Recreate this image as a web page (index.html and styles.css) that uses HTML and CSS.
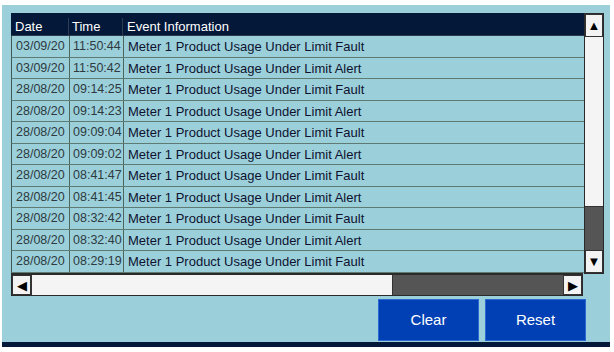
FILE: index.html
```html
<html>
<head>
	<meta charset="utf-8">
	<title>Event Log</title>
	<link rel="stylesheet" href="styles.css">
</head>
<body>
	<div class="screen">
		<div class="log">
			<div class="log-main">
				<div class="row head">
					<div class="cell c-date">Date</div>
					<div class="cell c-time">Time</div>
					<div class="cell c-event">Event Information</div>
				</div>
				<div class="row"><div class="cell c-date">03/09/20</div><div class="cell c-time">11:50:44</div><div class="cell c-event">Meter 1 Product Usage Under Limit Fault</div></div>
				<div class="row"><div class="cell c-date">03/09/20</div><div class="cell c-time">11:50:42</div><div class="cell c-event">Meter 1 Product Usage Under Limit Alert</div></div>
				<div class="row"><div class="cell c-date">28/08/20</div><div class="cell c-time">09:14:25</div><div class="cell c-event">Meter 1 Product Usage Under Limit Fault</div></div>
				<div class="row"><div class="cell c-date">28/08/20</div><div class="cell c-time">09:14:23</div><div class="cell c-event">Meter 1 Product Usage Under Limit Alert</div></div>
				<div class="row"><div class="cell c-date">28/08/20</div><div class="cell c-time">09:09:04</div><div class="cell c-event">Meter 1 Product Usage Under Limit Fault</div></div>
				<div class="row"><div class="cell c-date">28/08/20</div><div class="cell c-time">09:09:02</div><div class="cell c-event">Meter 1 Product Usage Under Limit Alert</div></div>
				<div class="row"><div class="cell c-date">28/08/20</div><div class="cell c-time">08:41:47</div><div class="cell c-event">Meter 1 Product Usage Under Limit Fault</div></div>
				<div class="row"><div class="cell c-date">28/08/20</div><div class="cell c-time">08:41:45</div><div class="cell c-event">Meter 1 Product Usage Under Limit Alert</div></div>
				<div class="row"><div class="cell c-date">28/08/20</div><div class="cell c-time">08:32:42</div><div class="cell c-event">Meter 1 Product Usage Under Limit Fault</div></div>
				<div class="row"><div class="cell c-date">28/08/20</div><div class="cell c-time">08:32:40</div><div class="cell c-event">Meter 1 Product Usage Under Limit Alert</div></div>
				<div class="row"><div class="cell c-date">28/08/20</div><div class="cell c-time">08:29:19</div><div class="cell c-event">Meter 1 Product Usage Under Limit Fault</div></div>
				<div class="hscroll">
					<div class="sb-btn">&#9664;</div>
					<div class="h-thumb"></div>
					<div class="h-track"></div>
					<div class="sb-btn">&#9654;</div>
				</div>
			</div>
			<div class="vscroll">
				<div class="sb-btn v-up">&#9650;</div>
				<div class="v-thumb"></div>
				<div class="v-track"></div>
				<div class="sb-btn v-down">&#9660;</div>
			</div>
		</div>
		<div class="actions">
			<div class="btn">Clear</div>
			<div class="btn">Reset</div>
		</div>
	</div>
</body>
</html>
```

FILE: styles.css
```css
body {
	margin: 0;
	background-color: #ffffff;
	font-family: "Liberation Sans", Arial, sans-serif;
}
.screen {
	margin: 5px 4px 0 2px;
	height: 342px;
	box-sizing: border-box;
	padding: 8px 0 0 9px;
	background-color: #9bd0db;
	border-bottom: 5px solid #04183a;
}
.log {
	display: flex;
	width: 593px;
}
.log-main {
	width: 573px;
}
.row {
	display: flex;
	height: 21.5px;
	box-sizing: border-box;
	border-bottom: 1px solid #5d7b72;
	border-left: 1px solid #3f5a52;
	font-size: 13px;
	line-height: 21px;
	color: #1c2233;
}
.row.head {
	height: 23px;
	line-height: 18px;
	padding-top: 5px;
	background-color: #04183a;
	color: #ffffff;
	border: none;
	border-bottom: 1px solid #2a3a4a;
}
.cell {
	box-sizing: border-box;
	white-space: nowrap;
	overflow: hidden;
}
.c-date {
	width: 58px;
	padding-left: 4px;
	border-right: 1px solid #4c665e;
	color: #2e3a40;
	font-size: 12.5px;
}
.c-time {
	width: 54px;
	padding-left: 3px;
	border-right: 1px solid #4c665e;
	color: #2e3a40;
	font-size: 12.5px;
}
.c-event {
	flex: 1;
	padding-left: 4px;
	color: #0e1230;
}
.head .cell {
	color: #ffffff;
	font-size: 13px;
	border-right-color: #2c3c52;
}
.hscroll {
	display: flex;
	height: 23px;
	box-sizing: border-box;
	border: 1px solid #2a2a2a;
	border-top: 2px solid #2a2a2a;
	width: 572px;
}
.sb-btn {
	width: 19px;
	box-sizing: border-box;
	background-color: #f3f3f3;
	border: 1px solid #333333;
	color: #000000;
	font-size: 13px;
	text-align: center;
	line-height: 19px;
}
.h-thumb {
	width: 360px;
	background-color: #f4f4f4;
	border-left: 1px solid #333333;
	border-right: 1px solid #333333;
}
.h-track {
	flex: 1;
	background-color: #555555;
}
.vscroll {
	width: 20px;
	height: 261px;
	display: flex;
	flex-direction: column;
	box-sizing: border-box;
	border: 1px solid #2a2a2a;
}
.vscroll .sb-btn {
	width: auto;
	height: 23px;
	line-height: 21px;
}
.v-thumb {
	height: 169px;
	background-color: #f4f4f4;
	border-bottom: 1px solid #333333;
}
.v-track {
	flex: 1;
	background-color: #555555;
}
.actions {
	display: flex;
	justify-content: flex-end;
	gap: 6px;
	width: 593px;
	box-sizing: border-box;
	padding-right: 18px;
	margin-top: 3px;
}
.btn {
	width: 101px;
	height: 42px;
	box-sizing: border-box;
	background-color: #003fb4;
	border: 1px solid #2a6ad0;
	color: #ffffff;
	font-size: 15px;
	line-height: 40px;
	text-align: center;
}
```
